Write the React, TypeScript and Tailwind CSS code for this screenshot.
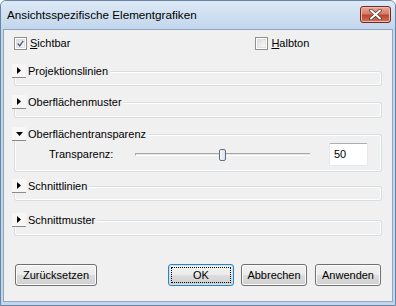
import React from 'react';

const font = "font-['Liberation_Sans',Arial,sans-serif]";

const Arrow: React.FC<{ open?: boolean }> = ({ open }) => (
  <div className="w-[14px] h-[14px] shrink-0 flex items-center justify-center bg-[#f7f7f7] border-b border-[#8a8a8a] -ml-[2px]">
    {open ? (
      <svg width="7" height="4" viewBox="0 0 7 4">
        <path d="M0 0 H7 L3.5 4 Z" fill="#000" />
      </svg>
    ) : (
      <svg width="4" height="7" viewBox="0 0 4 7">
        <path d="M0 0 V7 L4 3.5 Z" fill="#000" />
      </svg>
    )}
  </div>
);

interface GroupProps {
  title: string;
  open?: boolean;
  boxH: string;
  className?: string;
  children?: React.ReactNode;
}

const Group: React.FC<GroupProps> = ({ title, open, boxH, className, children }) => (
  <div className={`flex flex-col ${className ?? ''}`}>
    <div className="flex h-[14px] items-center">
      <Arrow open={open} />
      <span className="pl-[2px] pr-[2px] leading-none text-[11px] text-black">{title}</span>
      <div className="flex-1 self-end h-[7px] border-t border-r border-[#d5dfe5] rounded-tr-[3px] shadow-[inset_0_1px_0_#fff,inset_-1px_0_0_#fff]" />
    </div>
    <div className={`${boxH} border-l border-r border-b border-[#d5dfe5] rounded-b-[3px] shadow-[inset_1px_0_0_#fff,inset_-1px_0_0_#fff,inset_0_-1px_0_#fff]`}>
      {children}
    </div>
  </div>
);

const CheckBox: React.FC<{ checked?: boolean; label: string }> = ({ checked, label }) => (
  <div className="flex items-center gap-[3px]">
    <div className="w-[13px] h-[13px] border border-[#8e8f8f] bg-white p-[1px]">
      <div className="w-full h-full bg-gradient-to-br from-[#dcdcdc] to-[#fbfbfb] border border-[#e0e0e0] flex items-center justify-center">
        {checked && (
          <svg width="9" height="9" viewBox="0 0 9 9">
            <path d="M1 4.5 L3.5 7.5 L8 1" fill="none" stroke="#4a5f97" strokeWidth="1.8" />
          </svg>
        )}
      </div>
    </div>
    <span className="text-[11px] leading-none">
      <span className="underline underline-offset-[1px]">{label[0]}</span>
      {label.slice(1)}
    </span>
  </div>
);

const Btn: React.FC<{ label: string; def?: boolean; className?: string }> = ({ label, def, className }) => (
  <div
    className={`h-[22px] w-[66px] rounded-[3px] border ${
      def ? 'border-[#3c7fb1] shadow-[inset_0_0_0_1px_#bfe6f8]' : 'border-[#707070] shadow-[inset_0_0_0_1px_#fcfcfc]'
    } bg-[linear-gradient(#f2f2f2_0%,#ebebeb_50%,#dddddd_50%,#cfcfcf_100%)] flex items-center justify-center p-[2px] ${className ?? ''}`}
  >
    <div className={`w-full h-full flex items-center justify-center text-[11px] ${def ? 'border border-dotted border-black' : ''}`}>
      {label}
    </div>
  </div>
);

export default function App() {
  return (
    <div className={`w-[396px] h-[306px] ${font} text-black flex flex-col bg-[#c2d6ec] border border-[#6b85a3] rounded-t-[6px] overflow-hidden`}>
      <div className="h-[28px] shrink-0 flex items-center pl-[6px] pr-[4px] bg-gradient-to-b from-[#dde9f6] to-[#c2d6ec]">
        <span className="text-[11.7px] leading-none -mt-[1px]">Ansichtsspezifische Elementgrafiken</span>
        <div className="flex-1" />
        <div className="w-[31px] h-[17px] -mt-[2px] rounded-[3px] border border-[#6e2a22] bg-[linear-gradient(#e8a999_0%,#d47d67_45%,#c0462d_55%,#d0705a_100%)] shadow-[inset_0_0_0_1px_#eebbb0] flex items-center justify-center">
          <svg width="13" height="11" viewBox="0 0 13 11">
            <path d="M2 1.5 L11 9.5 M11 1.5 L2 9.5" stroke="#5a3a35" strokeWidth="3.6" strokeLinecap="round" />
            <path d="M2 1.5 L11 9.5 M11 1.5 L2 9.5" stroke="#fff" strokeWidth="2" strokeLinecap="round" />
          </svg>
        </div>
      </div>
      <div className="flex-1 mx-[2px] mb-[3px] bg-[#f0f0f0] border border-[#8ea6c2] flex flex-col px-[10px]">
        <div className="flex mt-[7px] h-[13px]">
          <CheckBox checked label="Sichtbar" />
          <div className="ml-[185px]">
            <CheckBox label="Halbton" />
          </div>
        </div>
        <Group title="Projektionslinien" boxH="h-[8px]" className="mt-[14px]" />
        <Group title="Oberflächenmuster" boxH="h-[9px]" className="mt-[9px]" />
        <Group title="Oberflächentransparenz" open boxH="h-[31px]" className="mt-[9px]">
          <div className="flex items-center h-[23px] mt-[2px]">
            <span className="ml-[34px] w-[86px] text-[11px] leading-none">Transparenz:</span>
            <div className="relative w-[175px] h-[12px] flex items-center">
              <div className="w-full h-[3px] border-t border-[#a9a9a9] border-l bg-[#e4e4e4] border-b border-b-white" />
              <div className="absolute left-[84px] top-0 w-[7px] h-[12px] rounded-[2px] border border-[#5c6f8c] bg-gradient-to-r from-[#f8f8f8] to-[#d6e2ee]" />
            </div>
            <div className="ml-[19px] w-[39px] h-[23px] bg-white border border-[#e3e9ef] border-t-[#abadb3] rounded-[2px] flex items-center pl-[4px] text-[11px]">
              50
            </div>
          </div>
        </Group>
        <Group title="Schnittlinien" boxH="h-[8px]" className="mt-[7px]" />
        <Group title="Schnittmuster" boxH="h-[9px]" className="mt-[12px]" />
        <div className="flex mt-[28px] pl-[1px]">
          <Btn label="Zurücksetzen" className="w-[82px]" />
          <Btn label="OK" def className="ml-[71px]" />
          <Btn label="Abbrechen" className="ml-[7px]" />
          <Btn label="Anwenden" className="ml-[8px]" />
        </div>
      </div>
    </div>
  );
}
